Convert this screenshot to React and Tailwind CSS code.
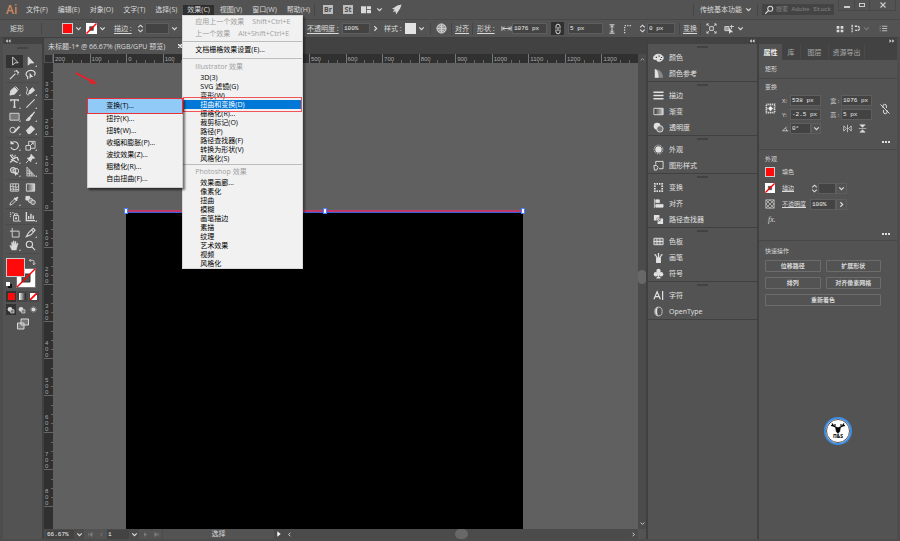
const ICONS = {
  select: <path d="M4 1v9l2.400-2.600H10z" fill="none" />,
  direct: <path d="M3.500 1v9l2.400-2.400h3.600z" fill="currentColor" />,
  wand: <path d="M1 11l6-6M8 1v2M11 4H9M10 2L9 3M6 2l.6.8M10 6l-.8-.6" fill="none" strokeWidth="1.300" />,
  lasso: (
    <>
      <path d="M3.500 8.500C1 8 .5 5 2 3.300 4 1 9 1 10.500 3.200c.8 1.300.4 3-.6 3.800M3.500 8.500c-1 .6-1 1.800 0 2.300" fill="none" strokeWidth="1.300" />
      <path d="M5 4v6.500l1.800-1.800H9z" fill="currentColor" stroke="none" />
    </>
  ),
  pen: <path d="M1 11l1-5 4-3.500L9.500 6 6 10zM7 1.500L10.500 5" fill="currentColor" />,
  curve: (
    <>
      <path d="M4 10l1-4 3-3 2.500 2.500-3 3z" fill="currentColor" />
      <path d="M1 2c2 1 2 3 1 5s0 4 2 4" fill="none" />
    </>
  ),
  type: <path d="M2 3.500V2h8v1.500M6 2v8M4.500 10h3" fill="none" strokeWidth="1.500" />,
  line: <path d="M1.500 10.500l9-9" fill="none" strokeWidth="1.200" />,
  rect: <path d="M1 2.500h10v7.500H1z" fill="#777" />,
  brush: <path d="M10.500 1L5.500 5.500l1.200 1.200zM5 6.300c-2 0-1.500 3-4 3.700 2 1 5 .5 5-2.500z" fill="currentColor" />,
  shaper: (
    <>
      <circle cx="4" cy="6.500" r="3" fill="none" />
      <path d="M11 2L5.500 7.500 4.500 10 7 9l5-5.500z" fill="currentColor" stroke="none" />
    </>
  ),
  eraser: <path d="M1.500 7L6.500 2l4 3.500-5 5h-2z" fill="currentColor" />,
  rotate: <path d="M2.500 3.500A4.300 4.300 0 1 1 2 8M2.200 1v3h3" fill="none" strokeWidth="1.200" />,
  scale: <path d="M1 6h5v5H1zM4 6V1.500h7V9H6M6 6l3-3M7 3h2v2" fill="none" />,
  width: (
    <>
      <path d="M1 2.500c2 0 2 3 3.500 3.500S8 4 9 5s0 2.500 2 3M1 10c1.500 0 2-2 3.500-2s3 2.500 5 2" fill="none" strokeWidth="1.500" />
      <path d="M3 1l2 3M7 2l-1 3M2 7h3" fill="none" />
    </>
  ),
  pin: <path d="M6.500 1.500l4 4-2 .3-2 2-.2 1.700L2.500 5.700l1.700-.2 2-2zM4 8l-3 3" fill="currentColor" />,
  shape: (
    <>
      <circle cx="4.500" cy="4.500" r="3" fill="#888" />
      <circle cx="7.500" cy="5.500" r="3" fill="none" />
      <path d="M6.500 5v6l1.600-1.600h2.200z" fill="currentColor" stroke="none" />
    </>
  ),
  persp: <path d="M2 1v10h9zM2 4.500l5.500 3M2 8l6 .5M4.800 3.800V11M7.500 7v4" fill="#777" strokeWidth=".7" />,
  mesh: <path d="M1.500 2h9v8h-9zM1.500 5c3-1 6 2 9 0M1.500 8c3-1 6 1 9 0M4.500 2c-1 3 1 5 0 8M7.500 2c-1 3 1 5 0 8" fill="none" strokeWidth=".9" />,
  gradient: (
    <>
      <linearGradient id="toolGrad"><stop stopColor="#444" /><stop offset="1" stopColor="#ddd" /></linearGradient>
      <path d="M1.500 2h9v8h-9z" fill="url(#toolGrad)" />
    </>
  ),
  dropper: (
    <>
      <path d="M1 11l.8-2.500L6.300 4 8 5.700 3.500 10.200z" fill="none" />
      <path d="M5.800 3.200l3 3M7.300 4.700l2.400-2.400" fill="none" strokeWidth="2" />
    </>
  ),
  blend: (
    <>
      <path d="M1 1.500h4v4H1z" fill="currentColor" />
      <circle cx="6" cy="6" r="2.400" fill="#888" />
      <circle cx="8.800" cy="8" r="2.400" fill="#777" />
    </>
  ),
  spray: (
    <>
      <path d="M5 5h5.500v6H5zM6 5V3h3v2M1 2h1.500M3.500 2H5M1 4h1.500M1 6h1" fill="none" />
      <circle cx="7.700" cy="8" r="1.200" fill="currentColor" stroke="none" />
    </>
  ),
  chart: <path d="M1.500 1v9.500H11M4 9V5.500M6.500 9V3M9 9V5" fill="none" strokeWidth="1.500" />,
  artboard: <path d="M3.500 1v3.500H11V11H3.500V4.500H1" fill="none" />,
  slice: <path d="M1.500 10.500L4 6l5-4.500 2 2-4.500 5zM7.500 3.500l2 2" fill="none" strokeWidth="1.200" />,
  hand: <path d="M3 11C2.500 9 1 7.500.8 6c1-.3 1.600.5 2.200 1.200L2.700 2.500c.6-.6 1 0 1 0L4.500 5V1.200c.5-.5 1-.2 1.100 0L6 5l.8-3.500c.6-.4 1-.1 1 .3L7.500 5.500 9 3.300c.6-.3 1 .1.9.6L8.700 8 8 11z" fill="currentColor" strokeWidth=".4" />,
  zoom: <path d="M8.200 4.800a3.400 3.400 0 1 1-6.800 0 3.400 3.400 0 0 1 6.800 0zM7.300 7.300L11 11" fill="none" strokeWidth="1.200" />,
  palette: (
    <>
      <path d="M.5 7c0-3 3-5 6-4.500s5.500 2.500 4.500 5-4 3-6 2.500c-1-.3-.5-1.500-1.500-1.800S.5 8.500.5 7z" fill="currentColor" />
      <path d="M3 5.800h1.400M6 4.500h1.400M8.500 6H10M7.500 8.200H9" stroke="#444" strokeWidth="1.300" />
    </>
  ),
  guide: (
    <>
      <path d="M2 1c5 0 9 4 9 9.500H2z" fill="#888" stroke="none" />
      <path d="M2 1c3 1 4 4 4 9.500H2z" fill="currentColor" stroke="none" />
    </>
  ),
  stroke: <path d="M.5 2.500h11M.5 6h11M.5 9.500h11" strokeWidth="1.500" />,
  panelGrad: (
    <>
      <linearGradient id="panelGrad"><stop stopColor="#333" /><stop offset="1" stopColor="#ccc" /></linearGradient>
      <path d="M1 2.500h10v7H1z" fill="url(#panelGrad)" />
    </>
  ),
  opacity: (
    <>
      <circle cx="4.500" cy="4.500" r="3.700" fill="currentColor" stroke="none" />
      <circle cx="7.500" cy="7.500" r="3.500" fill="#777" />
    </>
  ),
  appearance: (
    <>
      <circle cx="6" cy="6" r="3.500" fill="currentColor" stroke="none" />
      <circle cx="6" cy="6" r="4.800" fill="none" strokeDasharray="1 1" />
    </>
  ),
  styles: (
    <>
      <path d="M3 5V1.500h8v8H6.500" fill="none" />
      <path d="M1 6h3l1.500 2L4 11H1.500z" fill="none" />
    </>
  ),
  transform: <path d="M2 2h8v8H2z" fill="none" strokeWidth="2" strokeDasharray="1.600 1.067" strokeDashoffset=".8" />,
  align: <path d="M1.500 1v10M3 2h4v3H3zM3 7h8v3H3z" fill="currentColor" strokeWidth=".8" />,
  finder: (
    <>
      <path d="M1 1h6v3H4v3H1zM11 11H5V8h3V5h3z" fill="currentColor" stroke="none" />
      <path d="M4.800 4.800h2v2h-2z" fill="none" />
    </>
  ),
  swatches: <path d="M1 2.500h10v7H1zM1 6h10M4.300 2.500v7M7.600 2.500v7" fill="#777" />,
  brushes: <path d="M4 7h4v4.500H4zM5 7L2.500 3M6 7V1M7 7l2.500-4M1.500 3h2M8.500 3h2" fill="currentColor" strokeWidth="1.300" />,
  symbols: (
    <>
      <circle cx="6" cy="3.300" r="2.400" fill="currentColor" stroke="none" />
      <circle cx="3.200" cy="6.800" r="2.400" fill="currentColor" stroke="none" />
      <circle cx="8.800" cy="6.800" r="2.400" fill="currentColor" stroke="none" />
      <path d="M6 5v4l2 2H4l2-2z" fill="currentColor" strokeWidth="1" />
    </>
  ),
  character: <path d="M1 10L4.500 2 8 10M2.300 7.300h4.400M10.500 1v10" fill="none" strokeWidth="1.300" />,
  opentype: (
    <>
      <ellipse cx="6" cy="6" rx="4" ry="4.800" fill="none" strokeWidth=".8" />
      <path d="M6 1.200C1.500 1.500 1 10 6 10.800 4 9 4 3 6 1.200z" fill="currentColor" stroke="none" />
    </>
  ),
  chevronDown: <path d="M3 4.500l3 3 3-3" fill="none" strokeWidth="1.600" />,
  chevronUp: <path d="M3 7.500l3-3 3 3" fill="none" strokeWidth="1.600" />,
  chevronRight: <path d="M4.500 3l3 3-3 3" fill="none" strokeWidth="1.600" />,
  chevronLeft: <path d="M7.500 3l-3 3 3 3" fill="none" strokeWidth="1.600" />,
  stepper: <path d="M3 4.500L6 1.500l3 3M3 7.500l3 3 3-3" fill="none" strokeWidth="1.400" />,
  collapse: <path d="M5.500 2.500v7L1.500 6zM11 2.500v7L7 6z" fill="currentColor" stroke="none" />,
  expand: <path d="M1 2.500v7L5 6zM6.500 2.500v7l4-3.500z" fill="currentColor" stroke="none" />,
  workspace: <path d="M0 1.500h6v8.500H0zM7 1.500h5V5H7zM7 6h5v4H7z" fill="currentColor" stroke="none" />,
  rocket: <path d="M11.500.5L7 1.500 1 5.500l3 .5-2 3 3-1 .5 3.500L10 5z" fill="currentColor" stroke="none" />,
  globe: (
    <>
      <circle cx="6" cy="6" r="5" fill="#999" />
      <path d="M6 1v10M1 6h10M2.500 2.500c2 2 5 2 7 0M2.500 9.500c2-2 5-2 7 0" fill="none" strokeWidth=".8" />
    </>
  ),
  widthArrow: <path d="M1 3.500v5M11 3.500v5M2 6h8M4 4L2 6l2 2M8 4l2 2-2 2" fill="none" />,
  heightArrow: <path d="M3 1h6M3 11h6M6 2v8M4 4l2-2 2 2M4 8l2 2 2-2" fill="none" strokeWidth="1.200" />,
  link: <path d="M4 5.500V3.200a2 2 0 0 1 4 0v2.300M4 6.500v2.300a2 2 0 0 0 4 0V6.500M6 4v4" fill="none" />,
  unlink: <path d="M4 5V3a1.700 1.700 0 0 1 3.400 0v2M4.500 7v2A1.700 1.700 0 0 0 8 9V7M1.500 1.500l9 9" fill="none" />,
  corner: <path d="M2 11V2h9" fill="none" strokeWidth="1.500" strokeDasharray="1.500 1.500" />,
  isolate: <path d="M4 4h4v4H4zM1 1l2 2M11 1L9 3M1 11l2-2M11 11L9 9M1 3V1h2M9 1h2v2M1 9v2h2M9 11h2V9" fill="none" />,
  similar: (
    <>
      <path d="M1 3h5v5H1zM9 1v5M7 3h5" fill="#999" />
      <path d="M6 4.500V12l2-2h3z" fill="currentColor" stroke="none" />
    </>
  ),
  grid: <path d="M1 1.500h4v4H1zM7 1.500h4v4H7zM1 7h4v4H1zM7 7h4v4H7z" fill="currentColor" stroke="none" />,
  magnet: <path d="M1.500 1v10M5 3h3.500a2.800 2.800 0 0 1 0 5.600H5" fill="none" strokeWidth="1.700" strokeDasharray="3 .8" />,
  list: <path d="M1 3h1M4 3h7M1 6h1M4 6h7M1 9h1M4 9h7" />,
  swap: <path d="M2 3.500h5a2 2 0 0 1 2 2V10M4 1.500l-2 2 2 2M7 8l2 2 2-2" fill="none" strokeWidth="1.300" />,
  screens: <path d="M4 1h7.500v6H4zM.5 5H7v6H.5z" fill="#777" />,
  reference: (
    <>
      <path d="M1.500 1.500h9v9h-9zM1.500 6h9M6 1.500v9" fill="none" strokeWidth="1.800" strokeDasharray="1.200 .8" />
      <path d="M4.500 4.500h3v3h-3z" fill="#fff" stroke="none" />
    </>
  ),
  angle: <path d="M11 10H1l7-7M6 5.500c1.500 1 2 2.500 2 4.500" fill="none" strokeWidth="1.300" />,
  flipH: <path d="M1 2.500v7L4.500 6zM11 2.500v7L7.500 6zM6 1v10" fill="none" />,
  flipV: <path d="M2.500 1h7L6 4.500zM2.500 11h7L6 7.500zM1 6h10" fill="currentColor" strokeWidth=".8" />,
  checker: <path d="M1 1h10v10H1zM1 1l10 10M11 1L1 11M6 1L1 6l5 5 5-5z" fill="none" strokeWidth=".8" />,
  search: <path d="M10.500 4.500a3 3 0 1 1-6 0 3 3 0 0 1 6 0zM5.300 6.700L1.500 10.500" fill="none" strokeWidth="1.300" />,
  first: <path d="M2.500 2.500v7M9 2.500v7L4 6z" fill="currentColor" />,
  last: <path d="M9.500 2.500v7M3 2.500v7L8 6z" fill="currentColor" />,
  play: <path d="M3.500 2v8l5-4z" fill="currentColor" stroke="none" />,
  drawMode: (
    <>
      <circle cx="4.500" cy="5" r="3.500" fill="currentColor" stroke="none" />
      <path d="M5.500 5.500h5v5h-5z" fill="#777" />
    </>
  ),
}

function Icon({ name, className = 'size-3' }) {
  return (
    <svg className={`shrink-0 ${className}`} viewBox="0 0 12 12" stroke="currentColor" strokeWidth="1" aria-hidden="true">
      {ICONS[name]}
    </svg>
  )
}

function NoneSwatch({ className = 'size-[11px]' }) {
  return (
    <svg className={`shrink-0 ${className}`} viewBox="0 0 12 12" aria-hidden="true">
      <path d="M0 0h12v12H0z" fill="#fff" />
      <path d="M4 4h4v4H4z" fill="#535353" stroke="#222" strokeWidth=".6" />
      <path d="M.5 11.500l11-11" stroke="#f00" strokeWidth="1.600" />
    </svg>
  )
}

function Field({ id, label, value, className }) {
  return (
    <input
      id={id}
      aria-label={label}
      defaultValue={value}
      className={`h-[11px] min-w-0 shrink-0 border border-[#5e5e5e] bg-[#434343] px-px font-[Liberation_Mono,monospace] text-[6px] text-[#f0f0f0] outline-none ${className}`}
    />
  )
}

function IconButton({ icon, label, className = 'w-[9px]', iconClass = 'size-[9px]' }) {
  return (
    <button type="button" aria-label={label} className={`flex h-[11px] shrink-0 items-center justify-center ${className}`}>
      <Icon name={icon} className={iconClass} />
    </button>
  )
}

function Divider() {
  return <span className="h-3 w-px shrink-0 bg-[#464646]" />
}

const SUBMENU = ['扭拧(K)...', '扭转(W)...', '收缩和膨胀(P)...', '波纹效果(Z)...', '粗糙化(R)...', '自由扭曲(F)...']
const PS_EFFECTS = ['效果画廊...', '像素化', '扭曲', '模糊', '画笔描边', '素描', '纹理', '艺术效果', '视频', '风格化']

function MenuItem({ children }) {
  return (
    <button type="button" role="menuitem" className="flex h-[9px] w-full items-center pl-[17px] leading-none">
      {children}
    </button>
  )
}

function MenuLine() {
  return (
    <div className="flex h-[3px] items-center">
      <span className="h-px w-full bg-[#bdbdbd]" />
    </div>
  )
}

function DistortSubmenu() {
  return (
    <div role="menu" className="absolute -top-0.5 right-full w-24 border border-[#cfcfcf] bg-[#f1f1f1] pb-0.5 text-black shadow-[2px_2px_2px_#0008]">
      <button type="button" role="menuitem" className="relative flex h-[14px] w-full items-center bg-[#91c9f7] pl-[18px] leading-none">
        变换(T)...
        <span className="absolute -inset-x-px -inset-y-px border border-[#e8303a]" />
      </button>
      {SUBMENU.map((item) => (
        <button key={item} type="button" role="menuitem" className="flex h-3 w-full items-center pl-[18px] leading-none">
          {item}
        </button>
      ))}
    </div>
  )
}

function EffectMenu() {
  return (
    <div role="menu" className="absolute top-full -left-px w-[121px] border border-[#d8d8d8] bg-[#f1f1f1] text-black shadow-[2px_2px_2px_#0006]">
      <button type="button" disabled className="flex h-3 w-full items-center gap-2 pl-3 leading-none whitespace-nowrap text-[#a0a0a0]">
        <span>应用上一个效果</span>
        <span>Shift+Ctrl+E</span>
      </button>
      <button type="button" disabled className="flex h-3 w-full items-center gap-2 pl-3 leading-none whitespace-nowrap text-[#a0a0a0]">
        <span>上一个效果</span>
        <span>Alt+Shift+Ctrl+E</span>
      </button>
      <MenuLine />
      <button type="button" role="menuitem" className="flex h-[14px] w-full items-center pl-3 leading-none">文档栅格效果设置(E)...</button>
      <MenuLine />
      <div className="flex h-[13px] items-center pl-3 leading-none text-[#a0a0a0]">Illustrator 效果</div>
      <MenuItem>3D(3)</MenuItem>
      <MenuItem>SVG 滤镜(G)</MenuItem>
      <MenuItem>变形(W)</MenuItem>
      <div className="relative">
        <button type="button" role="menuitem" aria-expanded="true" className="flex h-[9px] w-full items-center bg-[#0078d7] pl-[17px] leading-none text-white">
          扭曲和变换(D)
        </button>
        <span className="absolute inset-x-0 -inset-y-[3px] border border-[#f0555a]" />
        <DistortSubmenu />
      </div>
      <MenuItem>栅格化(R)...</MenuItem>
      <MenuItem>裁剪标记(O)</MenuItem>
      <MenuItem>路径(P)</MenuItem>
      <MenuItem>路径查找器(F)</MenuItem>
      <MenuItem>转换为形状(V)</MenuItem>
      <MenuItem>风格化(S)</MenuItem>
      <MenuLine />
      <div className="flex h-3 items-center pl-3 leading-none text-[#a0a0a0]">Photoshop 效果</div>
      {PS_EFFECTS.map((item) => <MenuItem key={item}>{item}</MenuItem>)}
    </div>
  )
}

const MENU_BUTTON = 'h-[10px] px-1 leading-none whitespace-nowrap'

function MenuBar() {
  return (
    <header className="flex h-5 shrink-0 items-center border-b border-[#484848] pl-1.5">
      <span className="w-4 text-[12px] leading-none font-semibold text-[#d08a62]">Ai</span>
      <nav className="relative z-20 flex items-center gap-0.5">
        {['文件(F)', '编辑(E)', '对象(O)', '文字(T)', '选择(S)'].map((item) => (
          <button key={item} type="button" className={MENU_BUTTON}>{item}</button>
        ))}
        <div className="relative">
          <button type="button" aria-expanded="true" className={`${MENU_BUTTON} block bg-[#2f2f2f]`}>效果(C)</button>
          <EffectMenu />
        </div>
        {['视图(V)', '窗口(W)', '帮助(H)'].map((item) => (
          <button key={item} type="button" className={MENU_BUTTON}>{item}</button>
        ))}
      </nav>
      <div className="flex items-center">
        <Divider />
        <button type="button" className="ml-2 h-[9px] w-2.5 bg-[#bdbdbd] text-[7px] leading-none font-bold text-[#4a4a4a]">Br</button>
        <button type="button" className="ml-2.5 h-[9px] w-2.5 bg-[#bdbdbd] text-[7px] leading-none font-bold text-[#4a4a4a]">St</button>
        <IconButton icon="workspace" label="排列文档" className="ml-2 w-2.5" iconClass="size-2.5" />
        <IconButton icon="chevronDown" label="排列选项" className="ml-1 w-[9px]" />
        <IconButton icon="rocket" label="GPU 性能" className="ml-1.5 w-3" iconClass="size-[11px]" />
      </div>
      <div className="ml-auto flex h-full items-center">
        <Divider />
        <button type="button" className="ml-1.5 flex items-center gap-0.5 leading-none">
          传统基本功能
          <Icon name="chevronDown" className="size-[9px]" />
        </button>
        <span className="ml-1" />
        <Divider />
        <label className="ml-1 flex h-[11px] w-[72px] items-center gap-0.5 bg-[#444] pl-0.5">
          <Icon name="search" className="size-2.5" />
          <input type="text" aria-label="搜索" placeholder="搜索 Adobe Stock" className="w-[58px] bg-transparent font-[Liberation_Mono,Noto_Sans_CJK_SC,monospace] text-[6px] outline-none placeholder:text-[#858585]" />
        </label>
        <div className="mr-1 ml-1 flex h-[11px] self-start border border-t-0 border-[#484848]">
          <button type="button" aria-label="最小化" className="flex w-[15px] items-center justify-center"><span className="mt-1 h-0.5 w-1.5 bg-[#ccc]" /></button>
          <button type="button" aria-label="最大化" className="flex w-4 items-center justify-center border-x border-[#484848]"><span className="h-1 w-1.5 border border-[#ccc]" /></button>
          <button type="button" aria-label="关闭" className="flex w-[25px] items-center justify-center">
            <svg className="size-1.5" viewBox="0 0 6 6"><path d="M.5.5l5 5M5.500.5l-5 5" stroke="#ccc" strokeWidth="1.200" /></svg>
          </button>
        </div>
      </div>
    </header>
  )
}

function ControlBar() {
  return (
    <div className="flex h-[17px] shrink-0 items-center pl-2.5 leading-none whitespace-nowrap">
      <span className="w-[31px]">矩形</span>
      <Divider />
      <div className="ml-5 flex items-center">
        <button type="button" aria-label="填色" className="size-[11px] border border-[#ccc] bg-[#ff0a0a]" />
        <IconButton icon="chevronDown" label="填色选项" className="w-2.5" />
        <NoneSwatch className="ml-[3px] size-[11px]" />
        <IconButton icon="chevronDown" label="描边选项" className="w-2.5" />
      </div>
      <div className="ml-[7px] flex w-[190px] items-center">
        <label htmlFor="stroke-w" className="w-[21px] underline underline-offset-2">描边 :</label>
        <IconButton icon="stepper" label="描边步进" className="w-2.5" />
        <Field id="stroke-w" value="" className="w-6" />
        <IconButton icon="chevronDown" label="描边粗细" className="w-2.5" />
      </div>
      <div className="ml-[3px] flex items-center">
        <label htmlFor="opacity-c" className="w-[35px] underline underline-offset-2">不透明度 :</label>
        <Field id="opacity-c" value="100%" className="w-7" />
        <IconButton icon="chevronRight" label="不透明度选项" className="w-2.5" />
        <span className="ml-1 w-[21px]">样式 :</span>
        <button type="button" aria-label="图形样式" className="size-[11px] bg-[#e4e4e4]" />
        <IconButton icon="chevronDown" label="样式选项" className="mr-1 w-2.5" />
        <Divider />
        <IconButton icon="globe" label="重新着色图稿" className="mx-1 w-3" iconClass="size-[11px]" />
        <Divider />
        <button type="button" className="mx-[3px] underline underline-offset-2">对齐</button>
        <Divider />
        <span className="ml-1 w-6 underline underline-offset-2">形状 :</span>
        <Icon name="widthArrow" className="size-[11px]" />
        <Field id="shape-w" label="形状宽度" value="1076 px" className="w-[35px]" />
        <button type="button" aria-label="约束比例" className="mx-1 flex h-[13px] w-[13px] items-center justify-center bg-[#303030]"><Icon name="link" className="size-3" /></button>
        <Field id="shape-h" label="形状高度" value="5 px" className="w-[35px]" />
        <Icon name="heightArrow" className="ml-1 size-2.5" />
        <Icon name="corner" className="ml-1.5 size-2.5" />
        <IconButton icon="stepper" label="圆角步进" className="ml-1 w-2.5" />
        <Field id="radius" label="圆角半径" value="0 px" className="mr-1 w-7" />
        <Divider />
        <button type="button" className="mx-[3px] underline underline-offset-2">变换</button>
        <Divider />
        <IconButton icon="isolate" label="隔离选中的对象" className="ml-1 w-3" iconClass="size-[11px]" />
        <IconButton icon="similar" label="选择类似的对象" className="ml-1.5 w-3" iconClass="size-2.5" />
        <IconButton icon="chevronDown" label="选择类似选项" className="w-2.5" />
      </div>
      <div className="mr-3 ml-auto flex items-center">
        <IconButton icon="grid" label="对齐到像素" className="w-2" iconClass="size-2" />
        <IconButton icon="magnet" label="对齐选项" className="ml-1.5 w-2.5" />
        <IconButton icon="chevronDown" label="更多对齐" className="ml-0.5 w-2 text-[#7a7a7a]" />
        <IconButton icon="list" label="面板菜单" className="ml-2 w-2.5" />
      </div>
    </div>
  )
}

const TOOL_GROUPS = [
  ['select', 'direct', 'wand', 'lasso'],
  ['pen', 'curve', 'type', 'line', 'rect', 'brush', 'shaper', 'eraser'],
  ['rotate', 'scale', 'width', 'pin', 'shape', 'persp'],
  ['mesh', 'gradient', 'dropper', 'blend'],
  ['spray', 'chart'],
  ['artboard', 'slice', 'hand', 'zoom'],
]
const PLAIN_TOOLS = ['select', 'wand', 'lasso', 'mesh', 'gradient', 'blend', 'artboard', 'zoom']

function Toolbox() {
  return (
    <aside className="flex w-[39px] shrink-0 flex-col bg-[#535353]">
      <div className="h-1.5 bg-[#424242] pl-0.5"><Icon name="collapse" className="size-1.5" /></div>
      <div className="flex h-[11px] justify-center pt-[3px]"><span className="h-0.5 w-[11px] bg-[#444]" /></div>
      <div className="flex flex-col gap-[3px] px-[3px]">
        {TOOL_GROUPS.map((group) => (
          <div key={group[0]} className="relative grid grid-cols-2 after:absolute after:inset-x-0 after:-bottom-0.5 after:h-px after:bg-[#4a4a4a]">
            {group.map((tool) => (
              <button
                key={tool}
                type="button"
                aria-label={tool}
                className={`relative flex h-[13px] items-center justify-center ${tool === 'select' ? 'bg-[#333]' : ''}`}
              >
                <Icon name={tool} className="size-[11px]" />
                {!PLAIN_TOOLS.includes(tool) && (
                  <span className="absolute right-0.5 bottom-px size-0.5 bg-[#bbb] [clip-path:polygon(100%_0,100%_100%,0_100%)]" />
                )}
              </button>
            ))}
          </div>
        ))}
      </div>
      <div className="relative mt-1.5 ml-[3px] h-[30px] w-[30px]">
        <svg className="absolute right-0 bottom-0 size-[20px]" viewBox="0 0 20 20" aria-hidden="true">
          <path d="M.5.5h19v19H.5z" fill="#fff" stroke="#777" />
          <path d="M6 6h8v8H6z" fill="#535353" stroke="#333" />
          <path d="M1 19L19 1" stroke="#f00" strokeWidth="1.500" />
        </svg>
        <button type="button" aria-label="填色" className="absolute top-0 left-0 size-[19px] border border-[#ccc] bg-[#ff0a0a]" />
        <Icon name="swap" className="absolute top-0 right-0 size-2" />
        <svg className="absolute bottom-0 left-0 size-1.5" viewBox="0 0 6 6" aria-hidden="true">
          <path d="M2 2h4v4H2z" fill="#111" />
          <path d="M0 0h4v4H0z" fill="#fff" />
        </svg>
      </div>
      <div className="mx-[3px] mt-[3px] grid grid-cols-3 gap-px">
        <button type="button" aria-label="颜色" className="flex h-[11px] items-center justify-center bg-[#333]"><span className="size-[7px] bg-[#ff0a0a]" /></button>
        <button type="button" aria-label="渐变" className="flex h-[11px] items-center justify-center bg-[#474747]"><span className="size-[7px] bg-linear-to-r from-white to-[#222]" /></button>
        <button type="button" aria-label="无" className="flex h-[11px] items-center justify-center bg-[#474747]">
          <svg className="size-[7px]" viewBox="0 0 7 7"><path d="M0 0h7v7H0z" fill="#fff" /><path d="M0 7l7-7" stroke="#f00" strokeWidth="1.800" /></svg>
        </button>
      </div>
      <div className="mx-[3px] mt-0.5 grid grid-cols-3 gap-px">
        <button type="button" aria-label="正常绘图" className="flex h-[11px] items-center justify-center bg-[#333]"><Icon name="drawMode" className="size-2" /></button>
        <button type="button" aria-label="背面绘图" className="flex h-[11px] items-center justify-center"><Icon name="drawMode" className="size-2" /></button>
        <button type="button" aria-label="内部绘图" className="flex h-[11px] items-center justify-center"><Icon name="appearance" className="size-[7px]" /></button>
      </div>
      <IconButton icon="screens" label="更改屏幕模式" className="mt-[3px] w-full" iconClass="size-3" />
    </aside>
  )
}

const H_RULER = [200, 100, 0, 100, 200, 300, 400, 500, 600, 700, 800, 900, 1000, 1100, 1200, 1300]
const V_RULER = [300, 200, 100, 0, 100, 200, 300, 400, 500, 600, 700, 800]

function Canvas() {
  return (
    <div className="relative min-w-0 flex-1 overflow-hidden bg-[#606060] pt-[147px] pl-[73px]">
      <svg className="absolute top-2 left-[22px] h-4 w-6" viewBox="0 0 24 16" aria-hidden="true">
        <path d="M1 2l15 8" stroke="#f01c24" strokeWidth="1.600" />
        <path d="M22 13l-7.500-.5 2.500-5z" fill="#f01c24" />
      </svg>
      <div className="relative h-full w-[397px] bg-black">
        <div className="h-0.5 bg-[#c2386b]" />
        <div className="h-px bg-[#3a62d8]" />
        <div className="absolute inset-x-0 -top-0.5 flex justify-between">
          <span className="-ml-0.5 h-1.5 w-1 border border-[#4a80ff] bg-white" />
          <span className="h-1.5 w-1 border border-[#4a80ff] bg-white" />
          <span className="-mr-0.5 h-1.5 w-1 border border-[#4a80ff] bg-white" />
        </div>
      </div>
    </div>
  )
}

function StatusBar() {
  return (
    <footer className="flex h-2.5 shrink-0 items-center bg-[#4b4b4b]">
      <Field id="zoom" label="缩放" value="66.67%" className="ml-0.5 h-[9px]! w-7 border-0" />
      <IconButton icon="chevronDown" label="缩放级别" className="h-[9px] w-2.5" />
      <div className="flex h-full items-center bg-[#535353] text-[#7c7c7c]">
        <IconButton icon="first" label="首项" className="w-3" iconClass="size-[7px]" />
        <IconButton icon="chevronLeft" label="上一项" className="w-[11px]" iconClass="size-[7px]" />
      </div>
      <Field id="artboard" label="画板" value="1" className="h-[9px]! w-[22px] border-0" />
      <IconButton icon="chevronDown" label="画板列表" className="h-[9px] w-2.5" />
      <div className="flex h-full items-center bg-[#535353] text-[#7c7c7c]">
        <IconButton icon="play" label="下一项" className="w-3" iconClass="size-[7px]" />
        <IconButton icon="last" label="末项" className="w-[11px]" iconClass="size-[7px]" />
      </div>
      <span className="ml-px h-full w-[111px] bg-[#535353] text-center leading-[10px]">选择</span>
      <IconButton icon="play" label="状态菜单" className="w-2.5 text-white" iconClass="size-2" />
      <IconButton icon="chevronLeft" label="向左滚动" className="w-2.5" iconClass="size-[7px]" />
      <div className="flex h-full flex-1 justify-center">
        <span className="h-full w-[13px] rounded-full bg-[#686868]" />
      </div>
      <IconButton icon="chevronRight" label="向右滚动" className="w-[9px]" iconClass="size-[7px]" />
      <span className="h-full w-2 bg-[#535353]" />
    </footer>
  )
}

function Document() {
  return (
    <main className="flex min-w-0 flex-1 flex-col">
      <div className="flex h-4 shrink-0 bg-[#424242]">
        <div className="flex h-full w-[142px] items-center justify-between bg-[#535353] px-1 leading-none whitespace-nowrap">
          <span>未标题-1* @ 66.67% (RGB/GPU 预览)</span>
          <button type="button" aria-label="关闭文档">
            <svg className="size-1" viewBox="0 0 4 4"><path d="M0 0l4 4M4 0L0 4" stroke="#eee" strokeWidth="1.300" /></svg>
          </button>
        </div>
      </div>
      <div className="flex h-[9px] shrink-0 bg-[#303030] font-[Liberation_Sans,sans-serif] text-[6px] leading-none text-[#a8a8a8]">
        <span className="w-[9px] border border-[#505050]" />
        {H_RULER.map((n, i) => (
          <div key={i} className="relative flex min-w-0 flex-1 items-center border-l border-[#777] pl-px">
            {n}
            <span className="absolute bottom-0 left-1/4 h-[3px] w-px bg-[#666]" />
            <span className="absolute bottom-0 left-1/2 h-[3px] w-px bg-[#666]" />
            <span className="absolute bottom-0 left-3/4 h-[3px] w-px bg-[#666]" />
          </div>
        ))}
        <IconButton icon="chevronUp" label="向上滚动" className="h-[9px] w-2 bg-[#4b4b4b]" iconClass="size-[7px]" />
      </div>
      <div className="flex min-h-0 flex-1">
        <div className="w-[9px] shrink-0 overflow-hidden bg-[#303030] font-[Liberation_Sans,sans-serif] text-[6px] leading-[6px] text-[#a8a8a8]">
          {V_RULER.map((n, i) => (
            <div key={i} className="relative flex h-[37px] flex-col justify-end border-b border-[#666] pl-px">
              {String(n).split('').map((digit, k) => <span key={k}>{digit}</span>)}
              <span className="absolute top-1/4 right-0 h-px w-0.5 bg-[#666]" />
              <span className="absolute top-1/2 right-0 h-px w-0.5 bg-[#666]" />
              <span className="absolute top-3/4 right-0 h-px w-0.5 bg-[#666]" />
            </div>
          ))}
        </div>
        <Canvas />
        <div className="flex w-2 shrink-0 flex-col items-center bg-[#4b4b4b]">
          <div className="flex flex-1 flex-col justify-center pb-7">
            <span className="h-3.5 w-2 rounded-full bg-[#686868]" />
          </div>
          <IconButton icon="chevronDown" label="向下滚动" iconClass="size-[7px]" />
        </div>
      </div>
      <StatusBar />
    </main>
  )
}

const PANELS = [
  [['palette', '颜色'], ['guide', '颜色参考']],
  [['stroke', '描边'], ['panelGrad', '渐变'], ['opacity', '透明度']],
  [['appearance', '外观'], ['styles', '图形样式']],
  [['transform', '变换'], ['align', '对齐'], ['finder', '路径查找器']],
  [['swatches', '色板'], ['brushes', '画笔'], ['symbols', '符号']],
  [['character', '字符'], ['opentype', 'OpenType']],
]

function PanelDock() {
  return (
    <aside className="flex w-[109px] shrink-0 flex-col bg-[#535353] text-[#e2e2e2]">
      <div className="flex h-1.5 justify-end bg-[#424242] pr-0.5"><Icon name="collapse" className="size-1.5" /></div>
      {PANELS.map((group) => (
        <div key={group[0][0]} className="border-b border-[#404040]">
          <div className="flex h-[5px] justify-center pt-0.5"><span className="h-0.5 w-[11px] bg-[#424242]" /></div>
          {group.map(([icon, name]) => (
            <button key={name} type="button" className="flex h-4 w-full items-center gap-[5px] pl-[5px] leading-none">
              <Icon name={icon} className="size-[11px]" />
              {name}
            </button>
          ))}
        </div>
      ))}
    </aside>
  )
}

const ACTION = 'h-3 rounded-[1px] border border-[#6c6c6c] text-center font-bold leading-none'

function Properties() {
  return (
    <aside className="relative flex w-[138px] shrink-0 flex-col bg-[#535353] text-[6px] leading-none">
      <div className="flex h-1.5 justify-end bg-[#424242] pr-0.5"><Icon name="expand" className="size-1.5" /></div>
      <div role="tablist" className="flex h-4 bg-[#424242] text-[7px] text-[#a8a8a8]">
        <button type="button" role="tab" aria-selected="true" className="w-[23px] bg-[#535353] font-bold text-[#eee]">属性</button>
        <button type="button" role="tab" className="w-[19px] border-r border-[#4a4a4a]">库</button>
        <button type="button" role="tab" className="w-7 border-r border-[#4a4a4a]">图层</button>
        <button type="button" role="tab" className="w-9 border-r border-[#4a4a4a]">资源导出</button>
      </div>
      <div className="flex h-[19px] items-center border-b border-[#474747] pl-1.5">矩形</div>
      <section className="flex flex-col border-b border-[#474747] pl-1.5">
        <h2 className="flex h-4 items-center">变换</h2>
        <div className="flex">
          <div className="flex w-[17px] items-center pb-3"><Icon name="reference" className="size-[11px]" /></div>
          <div className="grid grid-cols-[8px_31px_20px_31px] items-center gap-y-[3px]">
            <label htmlFor="px">X:</label>
            <Field id="px" value="538 px" className="w-[31px]" />
            <label htmlFor="pw" className="text-right">宽 :&nbsp;</label>
            <Field id="pw" value="1076 px" className="w-[31px]" />
            <label htmlFor="py">Y:</label>
            <Field id="py" value="-2.5 px" className="w-[31px]" />
            <label htmlFor="ph" className="text-right">高 :&nbsp;</label>
            <Field id="ph" value="5 px" className="w-[31px]" />
            <label htmlFor="pa" aria-label="角度"><Icon name="angle" className="size-[7px]" /></label>
            <div className="flex">
              <Field id="pa" value="0°" className="w-[21px]" />
              <IconButton icon="chevronDown" label="角度选项" className="w-2.5 border border-[#5e5e5e]" />
            </div>
            <span />
            <div className="flex gap-1.5 pl-0.5">
              <IconButton icon="flipH" label="水平翻转" />
              <IconButton icon="flipV" label="垂直翻转" />
            </div>
          </div>
          <div className="flex h-7 flex-1 items-center justify-center"><Icon name="unlink" className="size-3" /></div>
        </div>
        <button type="button" className="flex h-[15px] items-center justify-end pr-[7px]" aria-label="更多变换选项">
          <svg className="h-0.5 w-2" viewBox="0 0 8 2"><path d="M0 0h2v2H0zM3 0h2v2H3zM6 0h2v2H6z" fill="#ddd" /></svg>
        </button>
      </section>
      <section className="flex flex-col border-b border-[#474747] pl-1.5">
        <h2 className="flex h-[14px] items-center pt-1">外观</h2>
        <div className="flex h-4 items-center gap-[7px]">
          <button type="button" aria-label="填色" className="size-2.5 border border-[#ccc] bg-[#ff0a0a]" />
          填色
        </div>
        <div className="flex h-4 items-center">
          <NoneSwatch className="size-2.5" />
          <label htmlFor="pstroke" className="ml-[7px] w-7 underline underline-offset-1">描边</label>
          <IconButton icon="stepper" label="描边步进" className="w-2" />
          <Field id="pstroke" value="" className="w-[18px]" />
          <IconButton icon="chevronDown" label="描边粗细" className="w-[11px] border border-[#5e5e5e]" />
        </div>
        <div className="flex h-4 items-center">
          <Icon name="checker" className="size-2.5" />
          <label htmlFor="popacity" className="ml-[7px] w-7 underline underline-offset-1">不透明度</label>
          <Field id="popacity" value="100%" className="w-[26px]" />
          <IconButton icon="chevronRight" label="不透明度选项" className="w-[11px] border border-[#5e5e5e]" />
        </div>
        <button type="button" className="h-4 pl-[3px] text-left font-[Liberation_Serif,serif] text-[8px] leading-none italic">fx.</button>
        <button type="button" className="flex h-3 items-center justify-end pr-[7px]" aria-label="更多外观选项">
          <svg className="h-0.5 w-2" viewBox="0 0 8 2"><path d="M0 0h2v2H0zM3 0h2v2H3zM6 0h2v2H6z" fill="#ddd" /></svg>
        </button>
      </section>
      <section className="pr-4 pl-1.5">
        <h2 className="flex h-[19px] items-center">快速操作</h2>
        <div className="grid grid-cols-2 gap-[5px]">
          <button type="button" className={ACTION}>位移路径</button>
          <button type="button" className={ACTION}>扩展形状</button>
          <button type="button" className={ACTION}>排列</button>
          <button type="button" className={ACTION}>对齐像素网格</button>
          <button type="button" className={`${ACTION} col-span-2`}>重新着色</button>
        </div>
      </section>
      <div className="mt-auto mr-[45px] mb-[94px] flex size-7 flex-col items-center self-end rounded-full border-2 border-[#3e8ee8] bg-white text-black">
        <div className="flex size-6 flex-col items-center rounded-full border border-[#555] pt-0.5">
          <svg className="h-3 w-4" viewBox="0 0 16 12" fill="none" stroke="#000" aria-hidden="true">
            <path d="M7 5.500C4 5 3 4 2 1.500M4 4.300L1 3.500M5 4.800V2M9 5.500c3-.5 4-1.500 5-4M12 4.300l3-.8M11 4.800V2" strokeWidth="1.100" />
            <path d="M5.500 5.500h5l-.8 4L8 11.500 6.300 9.500z" fill="#000" strokeWidth=".5" />
          </svg>
          <span className="text-[5px] leading-none font-bold">П&amp;S</span>
        </div>
      </div>
    </aside>
  )
}

export default function App() {
  return (
    <div className="flex h-screen flex-col overflow-hidden bg-[#535353] font-[Open_Sans,Noto_Sans_CJK_SC,sans-serif] text-[7px] text-[#dadada]">
      <MenuBar />
      <ControlBar />
      <div className="flex min-h-0 flex-1 gap-0.5 border-x-[3px] border-t border-b-2 border-x-[#4d4d4d] border-t-[#404040] border-b-[#4d4d4d] bg-[#404040]">
        <Toolbox />
        <Document />
        <PanelDock />
        <Properties />
      </div>
    </div>
  )
}
